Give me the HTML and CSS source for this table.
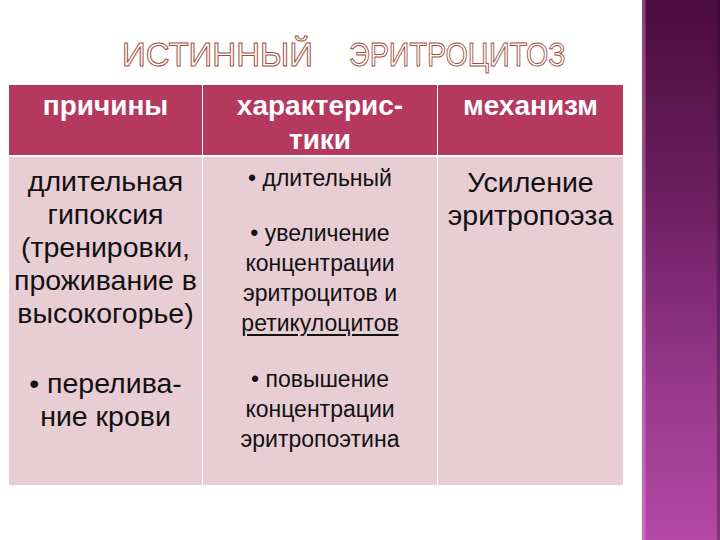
FILE: index.html
```html
<!DOCTYPE html>
<html lang="ru">
<head>
<meta charset="utf-8">
<link rel="stylesheet" href="styles.css">
</head>
<body>
<div class="slide">
  <main class="content">
    <h1 class="title"><span class="word1">ИСТИННЫЙ</span><span class="word2">ЭРИТРОЦИТОЗ</span></h1>
    <div class="table">
      <div class="th">причины</div>
      <div class="th">характерис-<br>тики</div>
      <div class="th">механизм</div>

      <div class="td big r1">длительная<br>гипоксия<br>(тренировки,<br>проживание в<br>высокогорье)</div>
      <div class="td small r1"><div>• длительный</div><div class="gap"></div><div>• увеличение<br>концентрации<br>эритроцитов и<br><u>ретикулоцитов</u></div></div>
      <div class="td big r1 span2">Усиление<br>эритропоэза</div>

      <div class="td big r2">• перелива-<br>ние крови</div>
      <div class="td small r2">• повышение<br>концентрации<br>эритропоэтина</div>
    </div>
  </main>
  <aside class="sidebar"></aside>
</div>
</body>
</html>
```

FILE: styles.css
```css
html, body {
  margin: 0;
  padding: 0;
  background: #ffffff;
}

.slide {
  width: 720px;
  height: 540px;
  display: flex;
  font-family: "Liberation Sans", Arial, sans-serif;
  overflow: hidden;
}

.content {
  width: 642px;
  padding-left: 9px;
  box-sizing: border-box;
}

.title {
  margin: 0;
  height: 85px;
  padding-top: 35px;
  box-sizing: border-box;
  padding-left: 113px;
  font-size: 33px;
  font-weight: normal;
  line-height: 40px;
  color: #ffffff;
  -webkit-text-stroke: 1px #a0503c;
  white-space: nowrap;
}

.title span {
  display: inline-block;
}

.title .word2 {
  margin-left: 36px;
  transform: scaleX(0.87);
  transform-origin: left center;
}

.table {
  width: 614px;
  display: grid;
  grid-template-columns: 193px 234px 185px;
  grid-template-rows: 72px 196px 132px;
  column-gap: 1px;
  background: #ffffff;
}

.th {
  background: #b5385f;
  color: #ffffff;
  font-weight: bold;
  font-size: 28px;
  line-height: 34px;
  text-align: center;
  padding-top: 4px;
  margin-bottom: 2px;
}

.td {
  background: #e8cdd5;
  color: #111111;
  text-align: center;
}

.big {
  font-size: 28.5px;
  line-height: 33px;
}

.small {
  font-size: 23px;
  line-height: 30px;
}

.gap {
  height: 25px;
}

.r1 {
  padding-top: 8px;
}

.r1.small {
  padding-top: 6px;
}

.r2 {
  padding-top: 14px;
}

.r2.small {
  padding-top: 11px;
}

.span2 {
  grid-row: span 2;
  padding-top: 9px;
}

.td u {
  text-underline-offset: 3px;
}

.sidebar {
  width: 78px;
  height: 540px;
  background:
    linear-gradient(to right, rgba(255,170,230,0.35) 0, rgba(255,170,230,0.35) 3px, rgba(0,0,0,0) 4px, rgba(0,0,0,0) 74px, rgba(40,0,40,0.35) 76px),
    linear-gradient(to bottom, #4b0c40 0%, #6a1e5e 35%, #95378a 70%, #b449a6 100%);
}
```
